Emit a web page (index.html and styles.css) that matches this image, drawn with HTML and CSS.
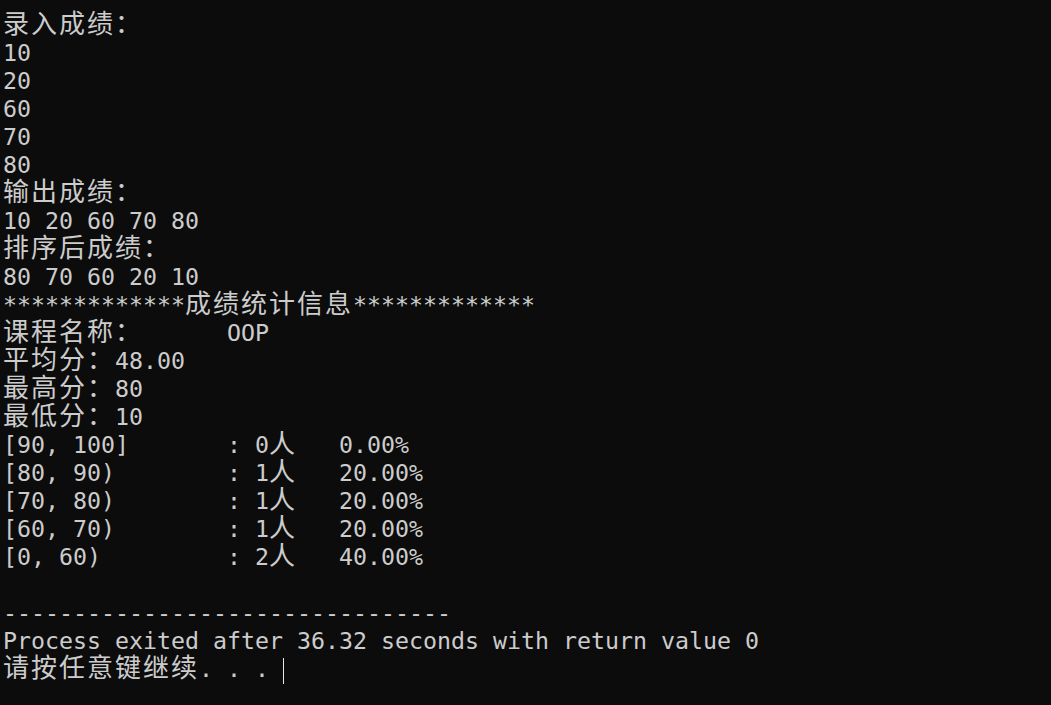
FILE: index.html
```html
<!DOCTYPE html>
<html lang="zh-CN">
<head>
<meta charset="utf-8">
<title>Console</title>
<link rel="stylesheet" href="styles.css">
</head>
<body>
<div class="console">
<div class="line"><span class="w">录入成绩：</span></div>
<div class="line">10</div>
<div class="line">20</div>
<div class="line">60</div>
<div class="line">70</div>
<div class="line">80</div>
<div class="line"><span class="w">输出成绩：</span></div>
<div class="line">10 20 60 70 80</div>
<div class="line"><span class="w">排序后成绩：</span></div>
<div class="line">80 70 60 20 10</div>
<div class="line">*************<span class="w">成绩统计信息</span>*************</div>
<div class="line"><span class="w">课程名称：</span>      OOP</div>
<div class="line"><span class="w">平均分：</span>48.00</div>
<div class="line"><span class="w">最高分：</span>80</div>
<div class="line"><span class="w">最低分：</span>10</div>
<div class="line">[90, 100]       : 0<span class="w">人</span>   0.00%</div>
<div class="line">[80, 90)        : 1<span class="w">人</span>   20.00%</div>
<div class="line">[70, 80)        : 1<span class="w">人</span>   20.00%</div>
<div class="line">[60, 70)        : 1<span class="w">人</span>   20.00%</div>
<div class="line">[0, 60)         : 2<span class="w">人</span>   40.00%</div>
<div class="line"></div>
<div class="line">--------------------------------</div>
<div class="line">Process exited after 36.32 seconds with return value 0</div>
<div class="line"><span class="w">请按任意键继续</span>. . . <span class="cursor"></span></div>
</div>
</body>
</html>
```

FILE: styles.css
```css
html, body {
  margin: 0;
  padding: 0;
  background: #0c0c0c;
  height: 100%;
}
.console {
  padding: 11px 0 0 3px;
  color: #cccccc;
  font-family: "DejaVu Sans Mono", "Liberation Mono", monospace;
  font-size: 23.25px;
}
.line {
  height: 28px;
  line-height: 28px;
  white-space: pre;
}
.w {
  font-family: "Noto Sans CJK SC", sans-serif;
  font-size: 26px;
  letter-spacing: 2px;
  line-height: 0;
}
.cursor {
  display: inline-block;
  width: 1px;
  height: 26px;
  background: #e8e8e8;
  vertical-align: -7px;
}
```
